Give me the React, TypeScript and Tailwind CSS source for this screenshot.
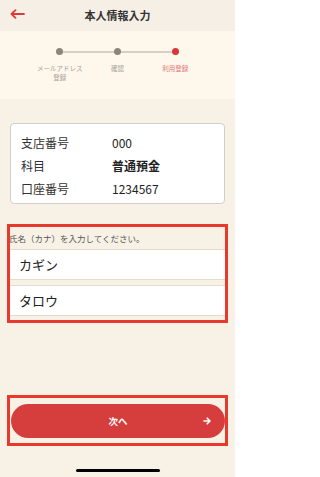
import React from "react";

const font = { fontFamily: '"Noto Sans CJK JP", "Noto Sans", sans-serif' };

export default function App() {
  return (
    <div
      className="w-[235px] h-[477px] bg-[#f8f1e6] flex flex-col overflow-hidden"
      style={font}
    >
      {/* header */}
      <div className="h-[31px] bg-[#f5efe5] relative flex items-center justify-center shrink-0">
        <svg
          className="absolute left-[10px] top-[9px]"
          width="15"
          height="10"
          viewBox="0 0 15 10"
          fill="none"
        >
          <path d="M14 5H2M5.5 1.2L1.5 5l4 3.8" stroke="#e0393a" strokeWidth="1.8" strokeLinecap="round" strokeLinejoin="round" />
        </svg>
        <span className="text-[11px] font-bold text-[#333] leading-none">本人情報入力</span>
      </div>

      {/* stepper */}
      <div className="h-[68px] bg-[#fdf7ec] shrink-0 pt-[17px]">
        <div className="relative mx-[31px] grid grid-cols-3">
          <div className="absolute left-[29px] right-[29px] top-[2.5px] h-[2px] bg-[#d6cfc4]" />
          <div className="flex flex-col items-center">
            <div className="relative w-[7px] h-[7px] rounded-full bg-[#8e8577]" />
            <span className="mt-[9px] text-[6.5px] leading-[8.5px] text-[#aaa39a] text-center">
              メールアドレス
              <br />
              登録
            </span>
          </div>
          <div className="flex flex-col items-center">
            <div className="relative w-[7px] h-[7px] rounded-full bg-[#8e8577]" />
            <span className="mt-[9px] text-[6.5px] leading-[8.5px] text-[#aaa39a]">確認</span>
          </div>
          <div className="flex flex-col items-center">
            <div className="relative w-[7px] h-[7px] rounded-full bg-[#d8373a]" />
            <span className="mt-[9px] text-[6.5px] leading-[8.5px] text-[#e0797a]">利用登録</span>
          </div>
        </div>
      </div>

      {/* card */}
      <div className="mt-[24px] mx-[10px] h-[81px] bg-white border border-[#cfcfcf] rounded-[4px] pt-[7px] shrink-0">
        {[
          ["支店番号", "000", false],
          ["科目", "普通預金", true],
          ["口座番号", "1234567", false],
        ].map(([l, v, b]) => (
          <div key={l as string} className="h-[23px] flex items-center text-[12px] text-[#333]">
            <span className="w-[101px] pl-[10px]">{l}</span>
            <span className={b ? "font-bold text-[#222]" : "text-[#222]"}>{v}</span>
          </div>
        ))}
      </div>

      {/* name inputs */}
      <div className="mt-[20px] mx-[7px] h-[99px] border-[3px] border-[#e8392c] shrink-0">
        <div className="h-[22px] flex items-center text-[8.5px] text-[#555] -ml-[1px] whitespace-nowrap overflow-hidden">
          氏名（カナ）を入力してください。
        </div>
        <div className="h-[31px] bg-white border-y border-[#e4dacd] flex items-center pl-[9px] text-[13px] text-[#222]">
          カギン
        </div>
        <div className="h-[31px] mt-[5px] bg-white border-y border-[#e4dacd] flex items-center pl-[9px] text-[13px] text-[#222]">
          タロウ
        </div>
      </div>

      <div className="flex-1" />

      {/* button */}
      <div className="mx-[7px] h-[51px] border-[3px] border-[#e8392c] shrink-0 pt-[6px] pl-[1px] pr-0">
        <div className="h-[34px] rounded-full bg-[#d63e3e] relative flex items-center justify-center">
          <span className="text-[9.5px] font-bold text-white">次へ</span>
          <svg className="absolute right-[14px] top-[13px]" width="8" height="8" viewBox="0 0 8 8" fill="none">
            <path d="M1 4h6M4.2 1.2L7 4 4.2 6.8" stroke="#fff" strokeWidth="1.6" strokeLinecap="round" strokeLinejoin="round" />
          </svg>
        </div>
      </div>

      {/* home indicator */}
      <div className="h-[31px] flex items-end justify-center pb-[5px] shrink-0">
        <div className="w-[84px] h-[3px] rounded-full bg-black" />
      </div>
    </div>
  );
}
